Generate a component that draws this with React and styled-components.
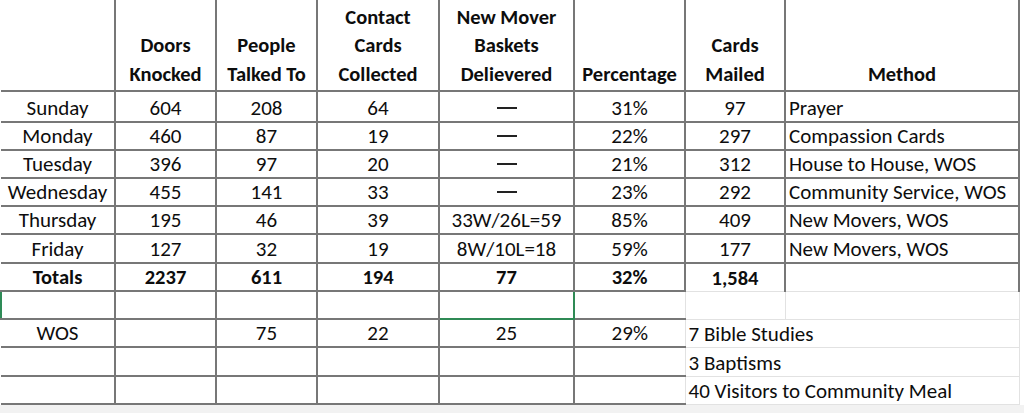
import React from 'react';
import styled, { createGlobalStyle } from 'styled-components';

const GlobalStyle = createGlobalStyle`
  html, body {
    margin: 0;
    padding: 0;
    background: #ffffff;
  }
  body {
    font-family: Carlito, Lato, "Liberation Sans", sans-serif;
    color: #0d0d0d;
  }
`;

const DARK = '2px solid #777777';
const LIGHT = '1px solid #e2e2e2';

const Page = styled.div`
  width: 1024px;
  height: 413px;
  overflow: hidden;
  background: #fff;
`;

const Sheet = styled.table`
  width: 1018px;
  table-layout: fixed;
  border-collapse: collapse;
  font-size: 21px;
`;

const Strip = styled.div`
  height: 9px;
  background: #f2f2f2;
`;

const Row = styled.tr`
  height: ${({ h }) => h}px;
`;

const HeadCell = styled.th`
  font-weight: 700;
  font-size: 20.5px;
  text-align: center;
  vertical-align: bottom;
  line-height: 28.5px;
  padding: 0 0 2px;
  border-right: ${DARK};
  border-bottom: ${DARK};
  border-left: ${({ first }) => (first ? 'none' : DARK)};
  white-space: nowrap;
`;

const Cell = styled.td`
  font-weight: ${({ bold }) => (bold ? 700 : 400)};
  font-size: ${({ bold }) => (bold ? '20.5px' : '21px')};
  text-align: ${({ left }) => (left ? 'left' : 'center')};
  vertical-align: bottom;
  line-height: 24px;
  padding: ${({ left }) => (left ? '0 0 1px 3px' : '0 1px 1px')};
  white-space: nowrap;
  overflow: visible;
  border-bottom: ${({ soft }) => (soft ? LIGHT : DARK)};
  border-right: ${({ soft, openRight, closed }) => (closed ? DARK : openRight || soft ? LIGHT : DARK)};
  border-left: ${({ first, mark }) => (mark ? '2px solid #2e8b57' : first ? 'none' : 'inherit')};
  ${({ selected }) => selected && `
    border: 2px solid #2f8a55;
  `}
`;

const Dash = styled.span`
  display: inline-block;
  width: 20px;
  height: 2px;
  background: #222;
  vertical-align: middle;
  margin-bottom: 3px;
`;

const days = [
  ['Sunday', '604', '208', '64', null, '31%', '97', 'Prayer'],
  ['Monday', '460', '87', '19', null, '22%', '297', 'Compassion Cards'],
  ['Tuesday', '396', '97', '20', null, '21%', '312', 'House to House, WOS'],
  ['Wednesday', '455', '141', '33', null, '23%', '292', 'Community Service, WOS'],
  ['Thursday', '195', '46', '39', '33W/26L=59', '85%', '409', 'New Movers, WOS'],
  ['Friday', '127', '32', '19', '8W/10L=18', '59%', '177', 'New Movers, WOS'],
];

const heights = [31, 28, 28, 28, 28, 29];

const widths = [114, 101, 101, 122, 135, 111, 100, 234];

export default function App() {
  return (
    <Page>
      <GlobalStyle />
      <Sheet>
        <colgroup>
          {widths.map((w, i) => (
            <col key={i} style={{ width: w }} />
          ))}
        </colgroup>
        <tbody>
          <Row h={91}>
            <HeadCell first />
            <HeadCell>Doors<br />Knocked</HeadCell>
            <HeadCell>People<br />Talked To</HeadCell>
            <HeadCell>Contact<br />Cards<br />Collected</HeadCell>
            <HeadCell>New Mover<br />Baskets<br />Delievered</HeadCell>
            <HeadCell>Percentage</HeadCell>
            <HeadCell>Cards<br />Mailed</HeadCell>
            <HeadCell>Method</HeadCell>
          </Row>
          {days.map((d, i) => (
            <Row key={d[0]} h={heights[i]}>
              <Cell first>{d[0]}</Cell>
              <Cell>{d[1]}</Cell>
              <Cell>{d[2]}</Cell>
              <Cell>{d[3]}</Cell>
              <Cell>{d[4] || <Dash />}</Cell>
              <Cell>{d[5]}</Cell>
              <Cell>{d[6]}</Cell>
              <Cell left>{d[7]}</Cell>
            </Row>
          ))}
          <Row h={28}>
            <Cell first bold>Totals</Cell>
            <Cell bold>2237</Cell>
            <Cell bold>611</Cell>
            <Cell bold>194</Cell>
            <Cell bold>77</Cell>
            <Cell bold>32%</Cell>
            <Cell bold soft closed>1,584</Cell>
            <Cell soft closed />
          </Row>
          <Row h={28}>
            <Cell first mark />
            <Cell />
            <Cell />
            <Cell />
            <Cell selected />
            <Cell openRight />
            <Cell soft />
            <Cell soft />
          </Row>
          <Row h={28}>
            <Cell first>WOS</Cell>
            <Cell />
            <Cell>75</Cell>
            <Cell>22</Cell>
            <Cell>25</Cell>
            <Cell openRight>29%</Cell>
            <Cell soft left colSpan={2}>7 Bible Studies</Cell>
          </Row>
          <Row h={29}>
            <Cell first />
            <Cell />
            <Cell />
            <Cell />
            <Cell />
            <Cell openRight />
            <Cell soft left colSpan={2}>3 Baptisms</Cell>
          </Row>
          <Row h={28}>
            <Cell first />
            <Cell />
            <Cell />
            <Cell />
            <Cell />
            <Cell openRight />
            <Cell soft left colSpan={2}>40 Visitors to Community Meal</Cell>
          </Row>
        </tbody>
      </Sheet>
      <Strip />
    </Page>
  );
}
